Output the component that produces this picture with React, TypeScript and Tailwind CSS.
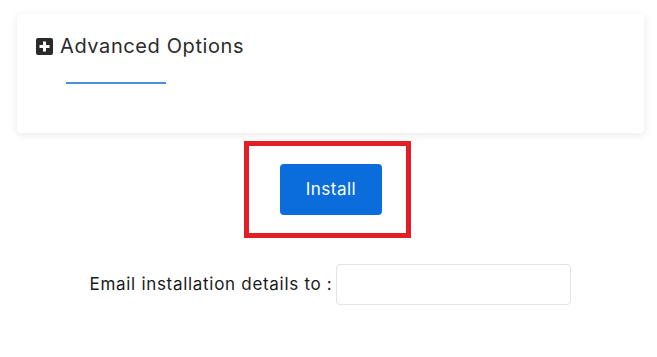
import React from 'react'

function PlusSquare() {
  return (
    <svg width="17" height="17" viewBox="0 0 17 17" className="shrink-0">
      <rect x="0" y="0" width="17" height="17" rx="2" fill="#2a2a2a" />
      <path d="M8.5 3.5v10M3.5 8.5h10" stroke="#fff" strokeWidth="3" />
    </svg>
  )
}

export default function App() {
  return (
    <div
      className="min-h-[357px] w-[657px] bg-white pt-[14px]"
      style={{ fontFamily: '"Inter", "Noto Sans", sans-serif' }}
    >
      <section className="ml-[17px] h-[119px] w-[627px] rounded-[4px] bg-white shadow-[0_2px_10px_rgba(0,0,0,0.09)]">
        <div className="flex items-center gap-[7px] pl-[19px] pt-[23px]">
          <PlusSquare />
          <h2 className="text-[20px] leading-[19px] font-normal tracking-[0.6px] text-[#2b2b2b]">Advanced Options</h2>
        </div>
        <div className="ml-[49px] mt-[26px] h-[2px] w-[100px] bg-[#4a90d9]" />
      </section>

      <div className="mt-[8px] flex justify-center">
        <div className="ml-[-2px] flex h-[97px] w-[167px] items-center justify-center border-[5px] border-[#e31e24] pl-[7px]">
          <button
            type="button"
            className="h-[51px] w-[102px] rounded-[4px] bg-[#0a6ddb] text-[17px] tracking-[0.5px] text-white"
          >
            Install
          </button>
        </div>
      </div>

      <div className="mt-[26px] flex items-center justify-center gap-[4px] pl-[4px]">
        <label className="text-[17px] tracking-[0.7px] text-[#1a1a1a]">Email installation details to :</label>
        <input
          type="text"
          className="h-[41px] w-[235px] rounded-[4px] border border-[#e3e3e3] bg-white outline-none"
        />
      </div>
    </div>
  )
}
